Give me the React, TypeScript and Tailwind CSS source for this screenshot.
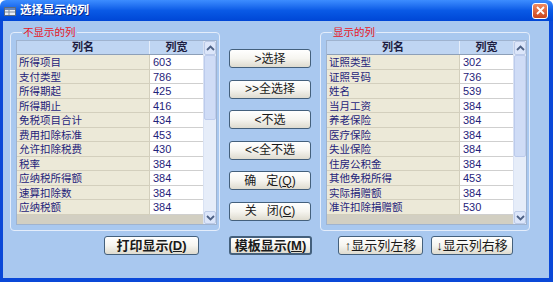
import React from 'react';

type Row = [string, string];

const hidden: Row[] = [
    ['所得项目', '603'],
    ['支付类型', '786'],
    ['所得期起', '425'],
    ['所得期止', '416'],
    ['免税项目合计', '434'],
    ['费用扣除标准', '453'],
    ['允许扣除税费', '430'],
    ['税率', '384'],
    ['应纳税所得额', '384'],
    ['速算扣除数', '384'],
    ['应纳税额', '384'],
];

const shown: Row[] = [
    ['证照类型', '302'],
    ['证照号码', '736'],
    ['姓名', '539'],
    ['当月工资', '384'],
    ['养老保险', '384'],
    ['医疗保险', '384'],
    ['失业保险', '384'],
    ['住房公积金', '384'],
    ['其他免税所得', '453'],
    ['实际捐赠额', '384'],
    ['准许扣除捐赠额', '530'],
];

const font = { fontFamily: '"Liberation Sans", "Noto Sans CJK SC", sans-serif' };

const Chevron: React.FC<{ down?: boolean }> = ({ down }) => (
    <svg width="9" height="6" viewBox="0 0 9 6" className={down ? 'rotate-180' : ''}>
        <path d="M1 5 L4.5 1.5 L8 5" fill="none" stroke="#4d6185" strokeWidth="1.8" />
    </svg>
);

const Grid: React.FC<{ rows: Row[]; thumb: number }> = ({ rows, thumb }) => (
    <div className="flex w-[201px] h-[185px] ml-[5px] mt-[1px] border border-[#9fb3cf] bg-[#d2cfc2]">
        <div className="w-[186px] flex flex-col">
            <div className="flex h-[14px] bg-[#bfd5f2] border-b border-[#8d9fb8] text-[11px] leading-[13px] font-bold text-[#1c1c40]">
                <div className="w-[133px] text-center border-r border-[#e6eefa]">列名</div>
                <div className="flex-1 text-center">列宽</div>
            </div>
            {rows.map(([name, width]) => (
                <div key={name} className="flex h-[14.5px] text-[10.5px] leading-[14px] text-[#1f237a]">
                    <div className="w-[133px] pl-[2px] bg-[#ece9d8] border-b border-r border-[#d3cfbd] whitespace-nowrap overflow-hidden">{name}</div>
                    <div className="flex-1 pl-[3px] bg-white border-b border-[#cfcfcf] text-[11px]">{width}</div>
                </div>
            ))}
            <div className="flex-1 bg-[#d2cfc2]" />
        </div>
        <div className="w-[13px] flex flex-col bg-[#e6edf9] border-l border-[#d9e2f3]">
            <div className="h-[14px] flex items-center justify-center bg-[#dce6fa] border border-[#bccbe8] rounded-[2px]">
                <Chevron />
            </div>
            <div style={{ height: thumb }} className="bg-[#cfdcf6] border border-[#bccbec] rounded-[2px]" />
            <div className="flex-1" />
            <div className="h-[13px] flex items-center justify-center bg-[#dce6fa] border border-[#bccbe8] rounded-[2px]">
                <Chevron down />
            </div>
        </div>
    </div>
);

const Group: React.FC<{ title: string; rows: Row[]; thumb: number }> = ({ title, rows, thumb }) => (
    <fieldset className="w-[210px] h-[206px] border border-[#e4edfb] rounded-[4px] pb-[5px]">
        <legend className="ml-[11px] px-[1px] h-[14px] text-[10.5px] leading-[14px] text-[#e8141c]">{title}</legend>
        <Grid rows={rows} thumb={thumb} />
    </fieldset>
);

const Btn: React.FC<{ children: React.ReactNode; className?: string }> = ({ children, className = '' }) => (
    <button
        className={`h-[19px] rounded-[3px] border border-[#44607c] bg-gradient-to-b from-white via-[#f6f5f0] to-[#dedbcf] text-[#1a1a1a] leading-none whitespace-nowrap ${className}`}
    >
        {children}
    </button>
);

export default function App() {
    return (
        <div className="w-[553px] h-[282px] flex flex-col overflow-hidden" style={font}>
            <div className="h-[21px] flex items-center bg-gradient-to-b from-[#3d8dff] via-[#0a5ae6] to-[#0046d6] rounded-t-[6px]">
                <svg width="12" height="10" viewBox="0 0 12 10" className="ml-[4px]">
                    <rect x="0.5" y="1.5" width="11" height="8" fill="#e9eef6" stroke="#5a6a80" />
                    <rect x="1" y="2" width="10" height="2" fill="#6b86b8" />
                    <line x1="1" y1="6" x2="11" y2="6" stroke="#7a8aa0" />
                    <line x1="5" y1="4" x2="5" y2="9" stroke="#7a8aa0" />
                </svg>
                <span className="ml-[4px] text-[11.5px] font-bold text-white [text-shadow:1px_1px_0_#0a2a8a]">选择显示的列</span>
                <div className="ml-auto mr-[5px] w-[16px] h-[16px] rounded-[3px] border border-white bg-gradient-to-b from-[#f08a60] to-[#c8431a] flex items-center justify-center">
                    <svg width="9" height="9" viewBox="0 0 9 9">
                        <path d="M1 1 L8 8 M8 1 L1 8" stroke="white" strokeWidth="1.8" />
                    </svg>
                </div>
            </div>
            <div className="flex-1 flex bg-[#a9c8ef] border-l-[3px] border-r-[4px] border-b-[4px] border-[#0a48d8] pl-[7px] pt-[4px] gap-[9px]">
                <div className="flex flex-col">
                    <Group title="不显示的列" rows={hidden} thumb={65} />
                    <Btn className="mt-[5px] ml-[94px] w-[95px] text-[13px] font-bold">
                        打印显示(<span className="underline">D</span>)
                    </Btn>
                </div>
                <div className="flex flex-col w-[82px] pt-[24px]">
                    <div className="flex flex-col gap-[11.5px] text-[12px]">
                        <Btn>&gt;选择</Btn>
                        <Btn>&gt;&gt;全选择</Btn>
                        <Btn>&lt;不选</Btn>
                        <Btn>&lt;&lt;全不选</Btn>
                        <Btn>确&nbsp;&nbsp;&nbsp;定(<span className="underline">Q</span>)</Btn>
                        <Btn>关&nbsp;&nbsp;&nbsp;闭(<span className="underline">C</span>)</Btn>
                    </div>
                    <Btn className="mt-[15px] w-[83px] text-[13px] font-bold border-2 border-[#2a3a52]">
                        模板显示(<span className="underline">M</span>)
                    </Btn>
                </div>
                <div className="flex flex-col">
                    <Group title="显示的列" rows={shown} thumb={102} />
                    <div className="flex mt-[5px] ml-[18px] gap-[8px] text-[13px]">
                        <Btn className="w-[85px]">↑显示列左移</Btn>
                        <Btn className="w-[82px]">↓显示列右移</Btn>
                    </div>
                </div>
            </div>
        </div>
    );
}
